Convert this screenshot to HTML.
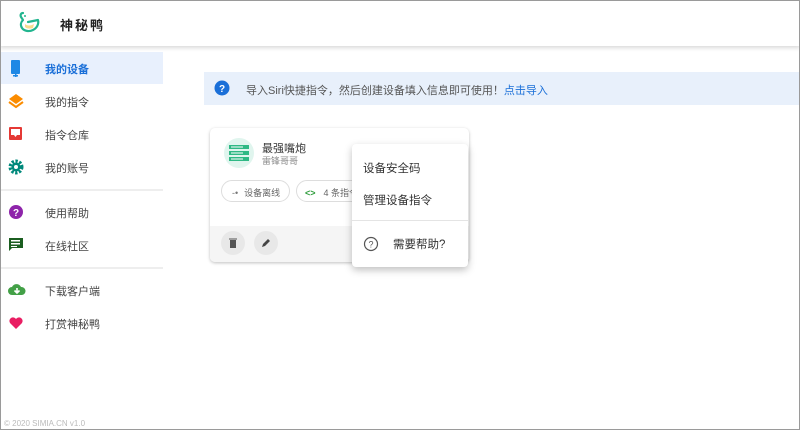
<!DOCTYPE html>
<html><head><meta charset="utf-8"><style>
*{margin:0;padding:0;box-sizing:border-box}
body{width:800px;height:426px;overflow:hidden;background:#fff;font-family:"Liberation Sans","Noto Sans CJK SC",sans-serif;position:relative}
.bd{position:absolute;left:0;top:0;width:800px;height:430px;border:1px solid #9a9a9a;z-index:10;pointer-events:none}
.hdr{position:absolute;left:0;top:0;width:800px;height:46px;background:#fff;box-shadow:0 2px 4px rgba(0,0,0,.15);z-index:2}
.hdr .t{position:absolute;left:60px;top:15px;font-size:13px;font-weight:bold;color:#222;letter-spacing:2px}
.side{position:absolute;left:0;top:46px;width:163px}
.it{position:absolute;left:0;width:163px;height:32px;font-size:11px;color:#444}
.it span{position:absolute;left:45px;top:9px}
.it svg{position:absolute;left:8px;top:8px}
.act{background:#e8f0fd}
.act span{color:#1a6fd8;font-weight:bold}
.div{position:absolute;left:0;width:163px;height:2px;background:#eee}
.ban{position:absolute;left:204px;top:72px;width:596px;height:33px;background:#e8f0fb;font-size:11px;color:#555}
.ban span{position:absolute;left:42px;top:10px}
.card{position:absolute;left:210px;top:128px;width:259px;height:134px;border-radius:5px;box-shadow:0 1px 3px rgba(0,0,0,.25);background:#fff;overflow:hidden}
.foot{position:absolute;left:0;bottom:0;width:100%;height:36px;background:#f5f5f5}
.chip{position:absolute;top:52px;height:22px;border:1px solid #ddd;border-radius:11px;font-size:9px;color:#666;padding:5px 0 0 0}
.rb{position:absolute;top:103px;width:24px;height:24px;border-radius:50%;background:#e8e8e8}
.menu{position:absolute;left:352px;top:144px;width:116px;height:123px;background:#fff;border-radius:4px;box-shadow:0 3px 8px rgba(0,0,0,.25);font-size:11.5px;color:#333;z-index:3}
</style></head><body>
<div class="bd"></div>
<div class="hdr">
<svg width="28" height="26" viewBox="0 0 28 26" style="position:absolute;left:16px;top:10px"><path d="M7 3c-2 0-3 2-2 4l2 3c-2 2-3 5-1 8 2 3 7 4 11 2 4-2 6-6 5-10l-10 2" fill="none" stroke="#22b58f" stroke-width="2.2" stroke-linecap="round" stroke-linejoin="round"/><path d="M9 14c2 2 6 2 9 0l-1 4c-3 1-6 1-8-1z" fill="#f6dc8e"/><circle cx="9" cy="6" r="1" fill="#22b58f"/></svg>
<div class="t">神秘鸭</div></div>
<div class="side">
<div class="it act" style="top:6px"><svg width="16" height="18"><rect x="3" y="0" width="9" height="14" rx="1" fill="#1e88e5"/><rect x="5" y="15" width="5" height="1.5" fill="#1e88e5"/><rect x="7" y="14" width="1.5" height="3" fill="#1e88e5"/></svg><span>我的设备</span></div>
<div class="it" style="top:39px"><svg width="16" height="16"><path d="M8 1l7 5-7 5-7-5z" fill="#fb8c00"/><path d="M1 9l7 5 7-5" fill="none" stroke="#fb8c00" stroke-width="2"/></svg><span>我的指令</span></div>
<div class="it" style="top:72px"><svg width="16" height="16"><rect x="1" y="1" width="13" height="13" rx="1" fill="#e53935"/><path d="M3 3h9v6h-3l-1.5 2L6 9H3z" fill="#fff"/></svg><span>指令仓库</span></div>
<div class="it" style="top:105px"><svg width="16" height="16"><circle cx="8" cy="8" r="5.5" fill="none" stroke="#00897b" stroke-width="4" stroke-dasharray="2.2 1.4"/><circle cx="8" cy="8" r="4.5" fill="#00897b"/><circle cx="8" cy="8" r="2" fill="#fff"/></svg><span>我的账号</span></div>
<div class="div" style="top:143px"></div>
<div class="it" style="top:150px"><svg width="16" height="16"><circle cx="8" cy="8" r="7" fill="#8e24aa"/><text x="8" y="12" font-size="10" font-weight="bold" fill="#fff" text-anchor="middle" font-family="Liberation Sans">?</text></svg><span>使用帮助</span></div>
<div class="it" style="top:183px"><svg width="16" height="16"><path d="M1 1h14v10H4l-3 3z" fill="#1b5e20"/><rect x="3" y="3" width="9" height="1.5" fill="#fff"/><rect x="3" y="6" width="9" height="1.5" fill="#fff"/><rect x="3" y="9" width="6" height="1" fill="#fff"/></svg><span>在线社区</span></div>
<div class="div" style="top:221px"></div>
<div class="it" style="top:228px"><svg width="18" height="16"><path d="M4 13a4 4 0 0 1 0-8 5 5 0 0 1 9 0 4 4 0 0 1 1 8z" fill="#43a047"/><path d="M9 6v5M6.5 8.5L9 11l2.5-2.5" stroke="#fff" stroke-width="1.6" fill="none"/></svg><span>下载客户端</span></div>
<div class="it" style="top:261px"><svg width="16" height="16"><path d="M8 14L2 8a3.5 3.5 0 0 1 6-4 3.5 3.5 0 0 1 6 4z" fill="#e91e63"/></svg><span>打赏神秘鸭</span></div>
</div>
<div style="position:absolute;left:4px;top:419px;font-size:8px;color:#bbb">© 2020 SIMIA.CN v1.0</div>
<div class="ban"><svg width="16" height="16" style="position:absolute;left:10px;top:8px"><circle cx="8" cy="8" r="7.5" fill="#1a6fd8"/><text x="8" y="12" font-size="10" font-weight="bold" fill="#fff" text-anchor="middle" font-family="Liberation Sans">?</text></svg><span>导入Siri快捷指令，然后创建设备填入信息即可使用！<b style="color:#1a6fd8;font-weight:normal">点击导入</b></span></div>
<div class="card">
<div style="position:absolute;left:14px;top:10px;width:30px;height:30px;border-radius:50%;background:#e0f5ee"></div>
<svg width="20" height="18" style="position:absolute;left:19px;top:16px"><rect x="0" y="1" width="20" height="4" fill="#2fb985"/><rect x="0" y="7" width="20" height="4" fill="#2fb985"/><rect x="0" y="13" width="20" height="4" fill="#2fb985"/><rect x="2" y="2.5" width="12" height="1" fill="#fff"/><rect x="2" y="8.5" width="12" height="1" fill="#fff"/><rect x="2" y="14.5" width="12" height="1" fill="#fff"/></svg>
<div style="position:absolute;left:52px;top:12px;font-size:11px;color:#333">最强嘴炮</div>
<div style="position:absolute;left:52px;top:26px;font-size:9px;color:#888">雷锋哥哥</div>
<div class="chip" style="left:11px;width:69px"><span style="margin-left:10px;color:#777">-•</span><span style="margin-left:6px">设备离线</span></div>
<div class="chip" style="left:86px;width:80px"><span style="margin-left:8px;color:#2e9c3c;font-weight:bold">&lt;&gt;</span><span style="margin-left:8px">4 条指令</span></div>
<div class="foot"></div>
<div class="rb" style="left:11px"><svg width="24" height="24"><rect x="9" y="9" width="6" height="8" fill="#555"/><rect x="8" y="7.5" width="8" height="1" fill="#555"/></svg></div>
<div class="rb" style="left:44px"><svg width="24" height="24"><path d="M8 16l1-3 5-5 2 2-5 5z" fill="#444"/></svg></div>
</div>
<div class="menu">
<div style="position:absolute;left:11px;top:16px">设备安全码</div>
<div style="position:absolute;left:11px;top:48px">管理设备指令</div>
<div style="position:absolute;left:0;top:76px;width:116px;height:1px;background:#e4e4e4"></div>
<svg width="16" height="16" style="position:absolute;left:11px;top:92px"><circle cx="8" cy="8" r="6.5" fill="none" stroke="#555" stroke-width="1.2"/><text x="8" y="11.5" font-size="9" fill="#555" text-anchor="middle" font-family="Liberation Sans">?</text></svg>
<div style="position:absolute;left:41px;top:92px">需要帮助?</div>
</div>
</body></html>
